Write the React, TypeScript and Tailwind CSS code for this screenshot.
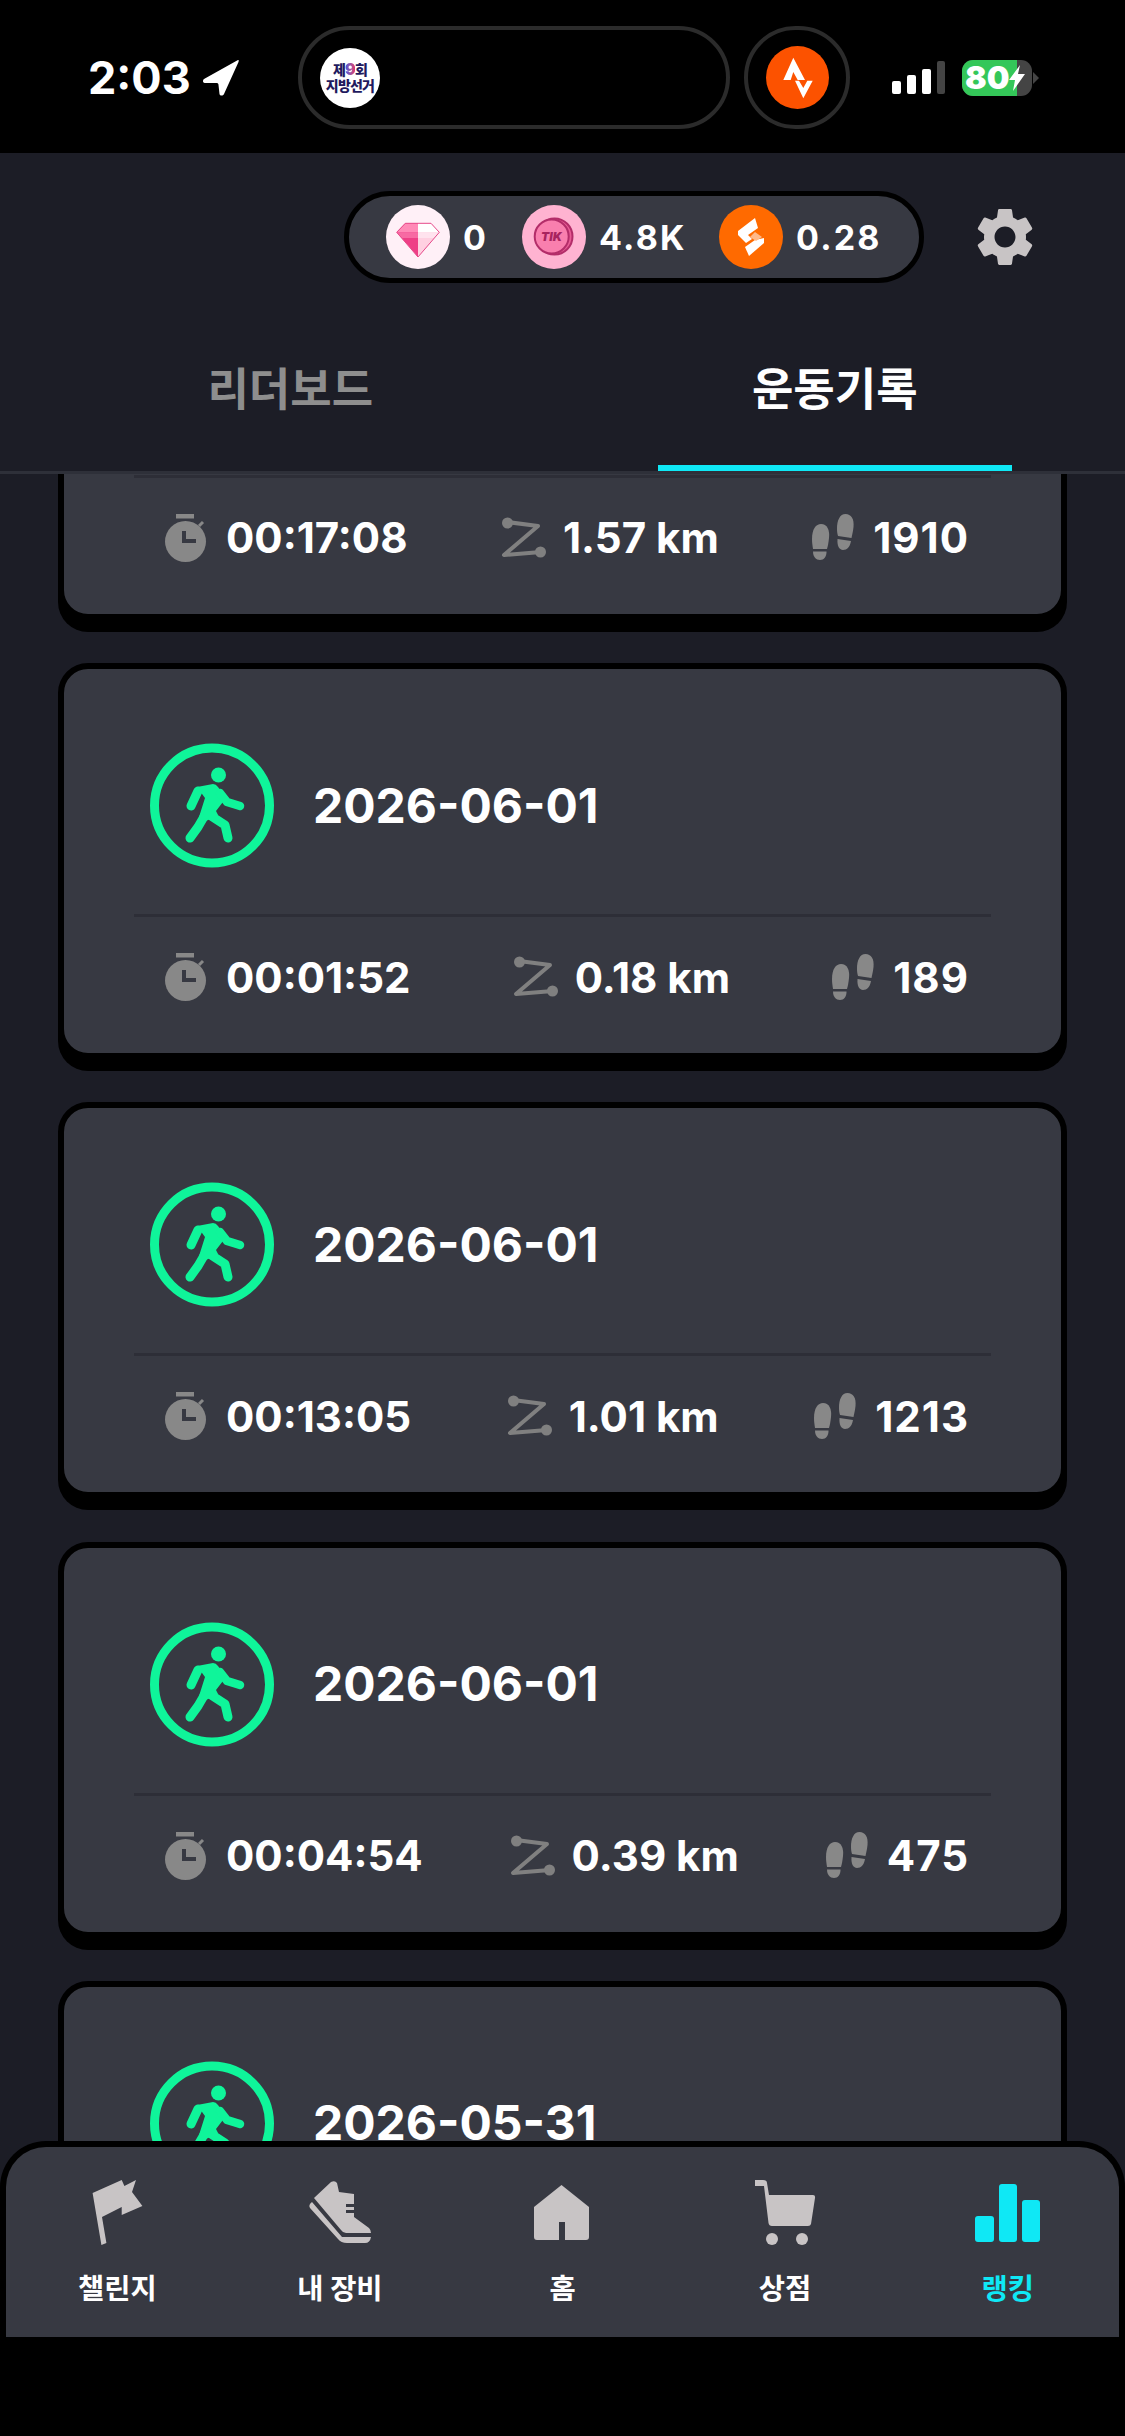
import { MdSettings } from "react-icons/md";

type WorkoutRecord = { date: string; time?: string; dist?: string; steps?: string };

// last card sits under the bottom nav, only its date row ever shows
const records: WorkoutRecord[] = [
  { date: "2026-06-01", time: "00:17:08", dist: "1.57 km", steps: "1910" },
  { date: "2026-06-01", time: "00:01:52", dist: "0.18 km", steps: "189" },
  { date: "2026-06-01", time: "00:13:05", dist: "1.01 km", steps: "1213" },
  { date: "2026-06-01", time: "00:04:54", dist: "0.39 km", steps: "475" },
  { date: "2026-05-31" },
];

function WalkIcon() {
  return (
    <svg width="124" height="125" viewBox="0 0 124 125" fill="none" className="shrink-0">
      <circle cx="62" cy="62.5" r="57.5" stroke="#0ff59a" strokeWidth="9" />
      <circle cx="68.5" cy="32" r="7.5" fill="#0ff59a" />
      <path d="M47 44 L63 41 Q66 41 68 44 L76 55 L66 68 L68 72 L56 78 L49 74 L55 55 Z" fill="#0ff59a" />
      <g stroke="#0ff59a" strokeLinecap="round" strokeLinejoin="round">
        <path d="M48 48 L41 63" strokeWidth="9" />
        <path d="M70 50 L77 59 L90 63" strokeWidth="8.5" />
        <path d="M55 72 L48 84 L40 95" strokeWidth="9" />
        <path d="M58 71 L75 82 L78 95" strokeWidth="9" />
      </g>
    </svg>
  );
}

function TimerIcon() {
  return (
    <svg width="42" height="48" viewBox="0 0 42 48" className="shrink-0">
      <rect x="11" y="0" width="18" height="4.5" fill="#888" />
      <path d="M34 12 L38 8" stroke="#888" strokeWidth="3" />
      <circle cx="20.5" cy="27.5" r="20.5" fill="#888" />
      <path d="M19 17 V27 H31" fill="none" stroke="#373942" strokeWidth="4" />
    </svg>
  );
}

function RouteIcon() {
  return (
    <svg width="46" height="42" viewBox="0 0 46 42" className="shrink-0">
      <path d="M6 5 L37 9 L3 38 L40 35" fill="none" stroke="#808080" strokeWidth="4" strokeLinejoin="round" />
      <circle cx="6.5" cy="6" r="5.5" fill="#808080" />
      <circle cx="39.5" cy="35" r="5.5" fill="#808080" />
    </svg>
  );
}

function StepsIcon() {
  return (
    <svg width="43" height="47" viewBox="0 0 43 47" fill="#888" className="shrink-0">
      <path d="M0 25 C0 15 4 10 9 10 C15 10 18 16 17 24 C16.5 28 16 32 15 35 L1 35 C0.5 32 0 28 0 25 Z" />
      <path d="M1 37.5 L14.5 37.5 C14.5 43 12 46 8 46 C4 46 1 43 1 37.5 Z" />
      <path d="M25 15 C25 6 28 0 33.5 0 C39 0 42.5 5 41.5 13 C41 18 40 21 39.5 24 L26 22 C25.5 20 25 18 25 15 Z" />
      <path d="M25.5 25 L39 27 C38 33 35 36 31 36 C27 35.5 25 32 25.5 25 Z" />
    </svg>
  );
}

function RecordCard({ date, time, dist, steps }: WorkoutRecord) {
  return (
    <div className="shrink-0 h-[396px] rounded-[30px] border-[6px] border-black bg-[#373942] shadow-[0_12px_0_0_#000]">
      <div className="flex items-center h-[245px] pl-[86px] pt-[28px]">
        <WalkIcon />
        <span className="ml-[39px] text-[48px] leading-none font-bold text-white">{date}</span>
      </div>
      <div className="h-[3px] mx-[70px] bg-[#2d2e37]" />
      {time && (
        <div className="flex items-center justify-between h-[120px] pl-[101px] pr-[92px] text-[42px] font-bold text-white">
          <div className="flex items-center gap-[19px]">
            <TimerIcon />
            <span>{time}</span>
          </div>
          <div className="flex items-center gap-[16px]">
            <RouteIcon />
            <span>{dist}</span>
          </div>
          <div className="flex items-center gap-[18px]">
            <StepsIcon />
            <span className="tracking-[1px]">{steps}</span>
          </div>
        </div>
      )}
    </div>
  );
}

function StatusBar() {
  return (
    <div className="flex items-center h-[153px] pt-[2px] bg-black shrink-0">
      <span className="ml-[88px] w-[106px] text-[45px] leading-none font-bold text-white">2:03</span>
      <svg width="36" height="36" viewBox="0 0 36 36" className="ml-[9px]">
        <path d="M35 0 L1 19 C-1 21 0 23 3 23 L14 23 C15 23 15.5 24 15.5 25 L16.5 34 C17 36 20 36 21 34 L35.5 2 C36 0 35.5 0 35 0 Z" fill="#fff" />
      </svg>
      <div className="flex items-center ml-[59px] w-[432px] h-[103px] rounded-[52px] border-[4px] border-[#2b2b2b] pl-[18px]">
        <div className="flex flex-col items-center justify-center w-[60px] h-[60px] rounded-full bg-white text-[14px] leading-[16px] font-black text-[#1f1a5e] tracking-[-0.8px] whitespace-nowrap">
          <span>
            제<span className="text-[16px] bg-gradient-to-r from-[#3b4fe0] to-[#e0306a] bg-clip-text text-transparent">9</span>회
          </span>
          <span>지방선거</span>
        </div>
      </div>
      <div className="flex items-center justify-center ml-[14px] w-[106px] h-[103px] rounded-full border-[4px] border-[#2b2b2b]">
        <svg width="63" height="63" viewBox="0 0 63 63">
          <circle cx="31.5" cy="31.5" r="31.5" fill="#fc5200" />
          <path d="M27.3 11.7 L17.3 34 H24.7 L27.3 26 L31.7 34 H39 Z" fill="#fff" />
          <path d="M29 34.7 H33 L37.3 42 L41.3 34.7 H46.7 L37.3 52.3 Z" fill="#fff" />
        </svg>
      </div>
      <div className="flex items-end gap-[6px] ml-[42px] h-[33px]">
        <div className="w-[9px] h-[13px] rounded-[2px] bg-white" />
        <div className="w-[9px] h-[19px] rounded-[2px] bg-white" />
        <div className="w-[9px] h-[25px] rounded-[2px] bg-white" />
        <div className="w-[8px] h-[33px] rounded-[2px] bg-[#444]" />
      </div>
      <div className="relative flex ml-[17px] w-[70px] h-[36px] rounded-[11px] overflow-hidden bg-[#444]">
        <div className="w-[55px] h-full bg-[#34c759]" />
        <div className="absolute inset-0 flex items-center pl-[3px] text-[32px] leading-none font-black text-white">
          80
          <svg width="16" height="26" viewBox="0 0 16 26">
            <path d="M11 0 L0 15 H6 L4 26 L16 9 H9 Z" fill="#fff" />
          </svg>
        </div>
      </div>
      <svg width="6" height="12" viewBox="0 0 6 12" className="ml-[1px]">
        <path d="M0 0 L6 6 L0 12 Z" fill="#444" />
      </svg>
    </div>
  );
}

function Balance() {
  return (
    <div className="flex items-center w-[580px] h-[92px] rounded-full border-[5px] border-black bg-[#373942] pl-[37px] text-[34px] font-bold tracking-[2.2px] text-white">
      <svg width="64" height="64" viewBox="0 0 64 64" className="shrink-0">
        <circle cx="32" cy="32" r="32" fill="#fff0f7" />
        <path d="M19.3 18.3 H32 V52 L10.7 27.3 Z" fill="#ee3f86" />
        <path d="M32 18.3 H45 L53.3 27.3 L32 52 Z" fill="#ffd0e1" />
        <path d="M19.3 18.3 H32 V27.3 H10.7 Z" fill="#ff8ab7" />
        <path d="M10.7 27.3 H32 V33 H15.5 Z" fill="#f76aa3" />
        <path d="M32 18.3 H45 L53.3 27.3 H32 Z" fill="#fff" />
        <path d="M32 27.3 H53.3 L48.5 33 H32 Z" fill="#ffe3ee" />
        <path d="M19.3 18.3 H45 L53.3 27.3 L32 52 L10.7 27.3 Z" fill="none" stroke="#e64a8a" strokeWidth="1" />
      </svg>
      <span className="ml-[13px] w-[36px]">0</span>
      <svg width="64" height="64" viewBox="0 0 64 64" className="ml-[23px] shrink-0">
        <circle cx="32" cy="32" r="32" fill="#ffb3d1" />
        <circle cx="32.5" cy="31.5" r="18" fill="#e85c95" stroke="#b32d69" strokeWidth="2" />
        <circle cx="29.7" cy="31.5" r="17" fill="#f97fae" stroke="#b32d69" strokeWidth="2" />
        <text x="29.5" y="35.5" textAnchor="middle" fontSize="12" fontWeight="900" fontStyle="italic" letterSpacing="0" fill="#a8245f">
          TIK
        </text>
      </svg>
      <span className="ml-[13px] w-[120px]">4.8K</span>
      <svg width="64" height="64" viewBox="0 0 64 64" className="shrink-0">
        <circle cx="32" cy="32" r="32" fill="#ff6a00" />
        <path d="M36 13 L39 23 L29 30 L33 34 L27 38 L19 30 L19 26 Z" fill="#fff" />
        <path d="M45 33 L45 38 L30 51 L26 42 L36 35 Z" fill="#fff" />
        <path d="M36 27 L43 32 L37 36 L31 32 Z" fill="#ffb98a" />
      </svg>
      <span className="ml-[13px]">0.28</span>
    </div>
  );
}

function Tabs() {
  return (
    <div className="grid grid-cols-2 h-[188px] px-[18px] shrink-0">
      <div className="flex flex-col items-center">
        <div className="flex flex-1 items-center pt-[30px]">
          <span className="text-[45px] leading-none font-bold text-[#8e8e8e]">리더보드</span>
        </div>
        <div className="h-[6px]" />
      </div>
      <div className="flex flex-col items-center">
        <div className="flex flex-1 items-center pt-[30px]">
          <span className="text-[45px] leading-none font-bold text-white">운동기록</span>
        </div>
        <div className="w-[354px] h-[6px] bg-[#0fe8f5]" />
      </div>
    </div>
  );
}

const gray = "#c8c4c5";

const navItems = [
  {
    label: "챌린지",
    icon: (
      <svg width="52" height="66" viewBox="91 2180 52 66">
        <path d="M92.6 2193 L101.4 2245 L106.4 2243 L102 2217 L121.7 2207 L121.7 2215 L142.4 2206 L132 2192 L136 2180 L124.4 2186 L121.7 2180 Z" fill={gray} />
      </svg>
    ),
  },
  {
    label: "내 장비",
    icon: (
      <svg width="64" height="66" viewBox="308 2180 64 66">
        <path d="M331 2182 Q335 2180 337 2183 L339 2192 L354 2194 V2204 H346 V2207 H354 V2210 H346 V2213 H354 V2217 L369 2228 Q371 2230 371 2233 L346 2233 Q343 2233 341 2230 L314 2198 Z" fill={gray} />
        <path d="M312 2202 L342 2237 H371 Q370 2243 365 2243 H347 Q341 2243 338 2239 L310 2208 Q308 2205 312 2202 Z" fill={gray} />
      </svg>
    ),
  },
  {
    label: "홈",
    icon: (
      <svg width="56" height="56" viewBox="535 2185 56 56">
        <path d="M562.5 2185 L590 2207 V2237 Q590 2240 587 2240 H566 V2222 H560 V2240 H538 Q535 2240 535 2237 V2207 Z" fill={gray} />
      </svg>
    ),
  },
  {
    label: "상점",
    icon: (
      <svg width="61" height="66" viewBox="755 2180 61 66">
        <path d="M755 2180 H763 Q767 2180 767 2183 L769 2195 H813 Q815.5 2195 815 2198 L811 2224 Q810.5 2226 808 2226 H772 Q769 2226 768.5 2223 L764 2186 H755 Z" fill={gray} />
        <circle cx="772" cy="2239" r="6" fill={gray} />
        <circle cx="802" cy="2239" r="6" fill={gray} />
      </svg>
    ),
  },
  {
    label: "랭킹",
    active: true,
    icon: (
      <svg width="66" height="60" viewBox="975 2182 66 60" fill="#0fe8f5">
        <rect x="975" y="2215" width="19" height="26" rx="3" />
        <rect x="999" y="2183" width="18" height="58" rx="3" />
        <rect x="1022" y="2199" width="18" height="42" rx="3" />
      </svg>
    ),
  },
];

function BottomNav() {
  return (
    <div className="absolute bottom-[99px] left-0 right-0 grid grid-cols-5 h-[196px] rounded-t-[46px] border-x-[6px] border-t-[6px] border-black bg-[#373942]">
      {navItems.map((item) => (
        <div key={item.label} className="flex flex-col items-center pt-[32px]">
          <div className="flex items-center justify-center h-[68px]">{item.icon}</div>
          <span className={`mt-[23px] text-[28.5px] leading-[38px] font-bold ${item.active ? "text-[#0fe8f5]" : "text-white"}`}>
            {item.label}
          </span>
        </div>
      ))}
    </div>
  );
}

export default function App() {
  return (
    <div className="relative flex flex-col w-full h-screen overflow-hidden bg-[#1c1d26] font-['Inter','Noto_Sans_CJK_KR',sans-serif]">
      <StatusBar />
      <div className="flex items-center pt-[38px] pl-[344px] shrink-0">
        <Balance />
        <MdSettings size={70} color={gray} className="ml-[46px]" />
      </div>
      <Tabs />
      <div className="h-[3px] bg-[#2e3039] shrink-0" />
      <div className="flex-1 overflow-hidden">
        <div className="flex flex-col gap-[43.33px] -mt-[250.33px] px-[58px]">
          {records.map((r, i) => (
            <RecordCard key={i} {...r} />
          ))}
        </div>
      </div>
      <div className="h-[99px] bg-black shrink-0" />
      <BottomNav />
    </div>
  );
}
